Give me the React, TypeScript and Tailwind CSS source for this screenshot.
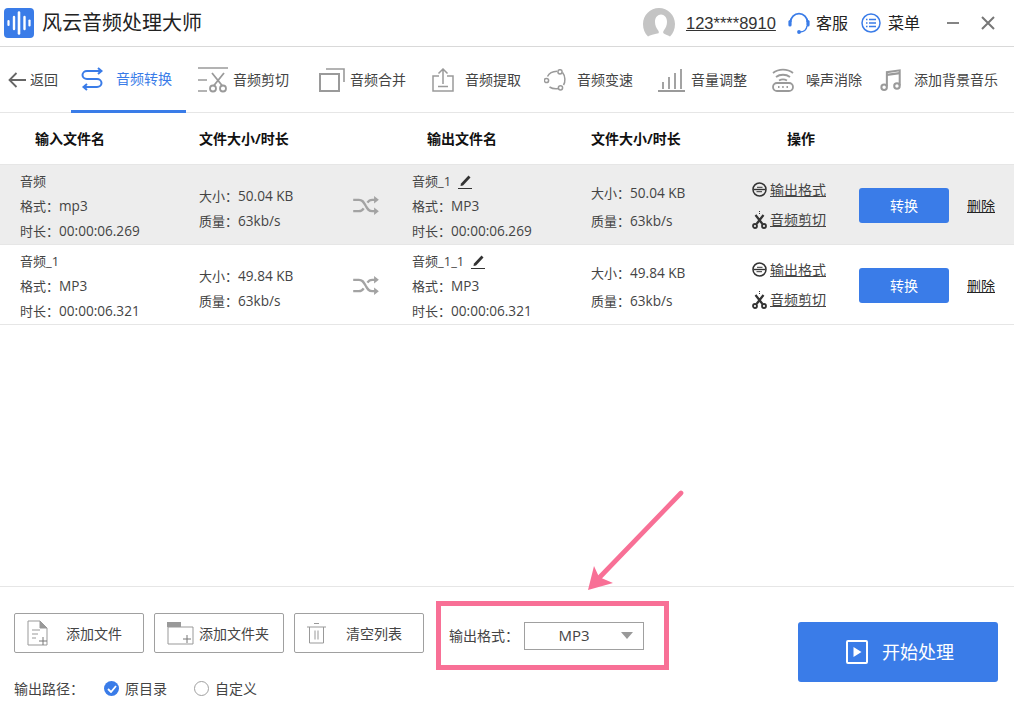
import React from "react";

const FONT = { fontFamily: '"Open Sans", "Noto Sans CJK SC", sans-serif' };

function Logo() {
  return (
    <svg width="30" height="30" viewBox="0 0 30 30">
      <rect width="30" height="30" rx="4" fill="#3a7ce8" />
      <g stroke="#fff" strokeLinecap="round" fill="none">
        <path d="M4.500 13v4" strokeWidth="2.200" />
        <path d="M10 9v12" strokeWidth="2.400" />
        <path d="M15 4.500v21" strokeWidth="2.600" />
        <path d="M20.500 9v12" strokeWidth="2.400" />
        <path d="M25.500 12.500v5" strokeWidth="2.200" />
      </g>
    </svg>
  );
}

function Avatar() {
  return (
    <svg width="32" height="30" viewBox="0 0 32 30">
      <path
        d="M5 28.500C1.800 25.500 0 21 0 16 0 7.200 7.200 0 16 0s16 7.200 16 16c0 5-1.800 9.500-5 12.500-2.400-1.300-5.500-2-6.500-3.200-.5-.8-.4-1.800.3-2.800 2-2.400 3.200-5.300 3.200-8.500 0-4.700-2.800-7.500-6-7.500s-6 2.800-6 7.500c0 3.200 1.200 6.100 3.200 8.500.7 1 .8 2 .3 2.800C10.500 26.500 7.400 27.200 5 28.500z"
        fill="#c4c4c4"
      />
    </svg>
  );
}

function Headset() {
  return (
    <svg width="22" height="22" viewBox="0 0 22 22" fill="none">
      <path d="M2.600 10a8.400 8.400 0 0 1 16.800 0" stroke="#3a7ce8" strokeWidth="1.800" />
      <rect x="0.400" y="8" width="3.200" height="6.500" rx="1.600" fill="#3a7ce8" />
      <rect x="18.400" y="8" width="3.200" height="6.500" rx="1.600" fill="#3a7ce8" />
      <path d="M19 14c-.5 3.500-3.500 5.800-7 6" stroke="#3a7ce8" strokeWidth="1.400" />
      <circle cx="11" cy="20" r="1.900" fill="#3a7ce8" />
    </svg>
  );
}

function MenuCircle() {
  return (
    <svg width="20" height="20" viewBox="0 0 20 20" fill="none">
      <circle cx="10" cy="10" r="9" stroke="#3a7ce8" strokeWidth="1.500" />
      <path d="M8 6.500h7M8 10h7M8 13.500h7" stroke="#3a7ce8" strokeWidth="1.500" />
      <path d="M5 6.500h1.500M5 10h1.500M5 13.500h1.500" stroke="#3a7ce8" strokeWidth="1.500" />
    </svg>
  );
}

function NavIcon({ name }: { name: string }) {
  const gray = "#9a9a9a";
  if (name === "convert") {
    return (
      <svg width="22" height="24" viewBox="0 0 22 24" fill="none" stroke="#3a7ce8" strokeWidth="2">
        <path d="M17 1l3.500 3-3.500 3" />
        <path d="M20 4H6C3.500 4 1.500 5.800 1.500 8S3.500 12 6 12h10c2.500 0 4.500 1.800 4.500 4s-2 4-4.500 4H3" />
        <path d="M6 17l-3.500 3L6 23" />
      </svg>
    );
  }
  if (name === "cut") {
    return (
      <svg width="30" height="26" viewBox="0 0 30 26" fill="none" stroke={gray} strokeWidth="1.600">
        <path d="M0 1h30M0 13h9M0 24h9" />
        <path d="M14 6l10.500 13M26 6L15.500 19" strokeWidth="1.800" />
        <circle cx="15" cy="21.500" r="3" strokeWidth="1.800" />
        <circle cx="25" cy="21.500" r="3" strokeWidth="1.800" />
      </svg>
    );
  }
  if (name === "merge") {
    return (
      <svg width="26" height="24" viewBox="0 0 26 24" fill="none" stroke={gray} strokeWidth="2">
        <rect x="1" y="6" width="19" height="17" />
        <path d="M7 1h18v13" strokeWidth="1.600" />
      </svg>
    );
  }
  if (name === "extract") {
    return (
      <svg width="22" height="24" viewBox="0 0 22 24" fill="none" stroke={gray} strokeWidth="1.500">
        <path d="M7 8H1v15h20V8h-6" />
        <path d="M11 16V1M6.500 5.500L11 1l4.500 4.500" />
        <path d="M6 18.500h10" />
      </svg>
    );
  }
  if (name === "speed") {
    return (
      <svg width="22" height="22" viewBox="0 0 22 22" fill="none" stroke={gray} strokeWidth="1.500">
        <path d="M3.500 7.500C5 4.500 8 2.500 13 2.300M18.500 3.500C21.500 7 21.500 13 19.500 16M14.500 19.500c-2.500.5-6 .3-9-1.500" />
        <circle cx="16" cy="2.800" r="2.100" />
        <circle cx="2.500" cy="11.500" r="2.100" />
        <circle cx="16.500" cy="18.800" r="2.100" />
      </svg>
    );
  }
  if (name === "volume") {
    return (
      <svg width="27" height="24" viewBox="0 0 27 24" fill="none" stroke={gray} strokeWidth="1.800">
        <path d="M0 23h27M5 21v-7M11 21V9M17 21V5M23 21V1" />
      </svg>
    );
  }
  if (name === "noise") {
    return (
      <svg width="22" height="24" viewBox="0 0 22 24" fill="none" stroke={gray} strokeWidth="1.800">
        <path d="M1 5C6.500 .5 15.500 .5 21 5M4 9c4-3 10-3 14 0M7 12.500c2.500-1.500 5.500-1.500 8 0" />
        <rect x="1" y="15" width="20" height="8" rx="4" />
        <path d="M6 19h1.500M10.200 19h1.500M14.500 19H16" />
      </svg>
    );
  }
  return (
    <svg width="24" height="24" viewBox="0 0 24 24" fill="none" stroke={gray}>
      <path d="M7.500 19V3.500L21.500 1.500V18" strokeWidth="2.200" />
      <path d="M7.500 6.500L21.500 4.500" strokeWidth="2.500" />
      <circle cx="4.500" cy="20" r="3" strokeWidth="2.200" />
      <circle cx="18.500" cy="18.500" r="3" strokeWidth="2.200" />
    </svg>
  );
}

const navItems = [
  { key: "convert", label: "音频转换", width: "w-[115px]", gap: "gap-[13px]", pl: "pl-[10px]" },
  { key: "cut", label: "音频剪切", width: "w-[117px]", gap: "gap-[5px]", pl: "pl-[12px]" },
  { key: "merge", label: "音频合并", width: "w-[114px]", gap: "gap-[5px]", pl: "pl-[16px]" },
  { key: "extract", label: "音频提取", width: "w-[112px]", gap: "gap-[11px]", pl: "pl-[15px]" },
  { key: "speed", label: "音频变速", width: "w-[115px]", gap: "gap-[11px]", pl: "pl-[15px]" },
  { key: "volume", label: "音量调整", width: "w-[113px]", gap: "gap-[6px]", pl: "pl-[14px]" },
  { key: "noise", label: "噪声消除", width: "w-[107px]", gap: "gap-[12px]", pl: "pl-[15px]" },
  { key: "music", label: "添加背景音乐", width: "w-[134px]", gap: "gap-[12px]", pl: "pl-[16px]" },
];

function Shuffle() {
  return (
    <svg className="ml-[1px]" width="27" height="19" viewBox="0 0 28 20" fill="none" stroke="#a3a3a3" strokeWidth="2.400">
      <path d="M0 4h6c4 0 5 2.500 7 6s3 6 7 6h4" />
      <path d="M0 16h6c2.500 0 3.800-1 5-3M15 7c1.200-2 2.500-3 5-3h4" />
      <path d="M22 0l5 4-5 4zM22 12l5 4-5 4z" fill="#a3a3a3" stroke="none" />
    </svg>
  );
}

function Pencil() {
  return (
    <svg width="14" height="16" viewBox="0 0 14 16">
      <path d="M3 10.500L10.500 2.500l2 2L5 12.500 2.500 13z" fill="#333" />
      <path d="M0 15.500h14" stroke="#333" strokeWidth="1" />
    </svg>
  );
}

function FormatIcon() {
  return (
    <svg width="15" height="15" viewBox="0 0 15 15" fill="none" stroke="#333">
      <circle cx="7.500" cy="7.500" r="6.500" strokeWidth="1.500" />
      <path d="M1.500 7.500h12" strokeWidth="1.400" />
      <path d="M5 5.300h5.500M4.500 9.700H10" strokeWidth="1" />
    </svg>
  );
}

function ScissorIcon() {
  return (
    <svg width="15" height="18" viewBox="0 0 15 18" fill="none" stroke="#333">
      <path d="M7.500 0v4" strokeWidth="1" strokeDasharray="1 1" />
      <path d="M3.500 4l7 9M11.500 4l-7 9" strokeWidth="2.200" />
      <circle cx="3" cy="15" r="2" strokeWidth="1.800" />
      <circle cx="12" cy="15" r="2" strokeWidth="1.800" />
    </svg>
  );
}

// latin runs in the reference are a bit wider than the CJK size next to them
function Val({ children }: { children: React.ReactNode }) {
  return <span className="text-[13.6px]">{children}</span>;
}

const rows = [
  {
    active: true,
    name: "音频",
    format: "mp3",
    duration: "00:00:06.269",
    size: "50.04 KB",
    out: "音频_1",
  },
  {
    active: false,
    name: "音频_1",
    format: "MP3",
    duration: "00:00:06.321",
    size: "49.84 KB",
    out: "音频_1_1",
  },
];

const gridCols = "grid-cols-[199px_153px_60px_179px_161px_107px_108px_1fr]";

function FileRow({ row }: { row: (typeof rows)[number] }) {
  return (
    <div
      className={`grid ${gridCols} h-[80px] pt-[2px] items-center border-b border-[#e6e6e6] text-[13px] text-[#444] ${
        row.active ? "bg-[#ededed]" : "bg-white"
      }`}
    >
      <div className="pl-[20px] flex flex-col gap-[5px] leading-[20px]">
        <span>{row.name}</span>
        <span>
          格式：<Val>{row.format}</Val>
        </span>
        <span>
          时长：<Val>{row.duration}</Val>
        </span>
      </div>
      <div className="flex flex-col gap-[5px] leading-[20px] mt-[5px]">
        <span>
          大小：<Val>{row.size}</Val>
        </span>
        <span>
          质量：<Val>63kb/s</Val>
        </span>
      </div>
      <div>
        <Shuffle />
      </div>
      <div className="flex flex-col gap-[5px] leading-[20px]">
        <span className="flex items-center gap-[7px]">
          {row.out} <Pencil />
        </span>
        <span>
          格式：<Val>MP3</Val>
        </span>
        <span>
          时长：<Val>{row.duration}</Val>
        </span>
      </div>
      <div className="flex flex-col gap-[8px] leading-[20px] mt-[2px]">
        <span>
          大小：<Val>{row.size}</Val>
        </span>
        <span>
          质量：<Val>63kb/s</Val>
        </span>
      </div>
      <div className="flex flex-col gap-[10px] leading-[20px] text-[14px] -mt-[2px]">
        <span className="flex items-center gap-[3px]">
          <FormatIcon />
          <span className="underline">输出格式</span>
        </span>
        <span className="flex items-center gap-[3px]">
          <ScissorIcon />
          <span className="underline">音频剪切</span>
        </span>
      </div>
      <div>
        <button className="w-[90px] h-[35px] rounded-[3px] bg-[#3a7ce8] text-white text-[14px]">转换</button>
      </div>
      <div className="underline text-[#222] text-[14px]">删除</div>
    </div>
  );
}

function BottomButton({ icon, label, className }: { icon: React.ReactNode; label: string; className: string }) {
  return (
    <button className={`relative flex items-center w-[130px] h-[40px] border border-[#a0a0a0] rounded-[2px] text-[14px] text-[#444] ${className}`}>
      {icon}
      <span>{label}</span>
    </button>
  );
}

export default function App() {
  return (
    <div className="relative flex flex-col h-[702px] w-[1014px] overflow-hidden bg-white" style={FONT}>
      {/* Title bar */}
      <div className="flex items-center h-[47px] border-b border-[#d9d9d9] pl-[4px] pr-[19px] text-[#222]">
        <Logo />
        <span className="ml-[8px] text-[20px] leading-none">风云音频处理大师</span>
        <div className="ml-auto flex items-center">
          <Avatar />
          <span className="ml-[11px] w-[91px] whitespace-nowrap font-['Liberation_Sans'] text-[16.5px] underline text-[#333]">123****8910</span>
          <span className="ml-[11px]">
            <Headset />
          </span>
          <span className="ml-[6px] text-[16px]">客服</span>
          <span className="ml-[13px]">
            <MenuCircle />
          </span>
          <span className="ml-[7px] text-[16px]">菜单</span>
          <svg className="ml-[26px]" width="14" height="14" viewBox="0 0 14 14" stroke="#777" strokeWidth="1.800">
            <path d="M1 7h12" />
          </svg>
          <svg className="ml-[21px]" width="14" height="14" viewBox="0 0 14 14" stroke="#777" strokeWidth="2">
            <path d="M1 1l12 12M13 1L1 13" />
          </svg>
        </div>
      </div>

      {/* Tool nav */}
      <div className="flex h-[66px] border-b border-[#e6e6e6] text-[14px] text-[#444]">
        <div className="flex items-center w-[71px] pl-[8px] gap-[3px]">
          <svg width="19" height="16" viewBox="0 0 19 16" fill="none" stroke="#666" strokeWidth="1.800">
            <path d="M18 8H2M8.500 1L1.500 8l7 7" />
          </svg>
          <span>返回</span>
        </div>
        {navItems.map((item) => (
          <div
            key={item.key}
            className={`flex items-center shrink-0 ${item.width} ${item.gap} ${item.pl} ${
              item.key === "convert" ? "border-b-[3px] border-[#3a7ce8] text-[#3a7ce8] h-[66px]" : ""
            }`}
          >
            <NavIcon name={item.key} />
            <span className="whitespace-nowrap">{item.label}</span>
          </div>
        ))}
      </div>

      {/* Table */}
      <div className={`grid ${gridCols} h-[52px] pb-[1px] border-b border-[#e6e6e6] items-center text-[14px] font-bold text-[#111]`}>
        <div className="pl-[35px]">输入文件名</div>
        <div>文件大小/时长</div>
        <div />
        <div className="pl-[15px]">输出文件名</div>
        <div>文件大小/时长</div>
        <div className="pl-[35px] col-span-2">操作</div>
        <div />
      </div>
      {rows.map((row) => (
        <FileRow key={row.name} row={row} />
      ))}

      {/* Footer */}
      <div className="mt-auto h-[116px] border-t border-[#e6e6e6] flex px-[14px]">
        <div className="flex flex-col">
          <div className="flex items-center gap-[10px] mt-[26px]">
            <BottomButton
              className="pl-[12px] gap-[17px]"
              label="添加文件"
              icon={
                <svg width="22" height="26" viewBox="0 0 22 26" fill="none" stroke="#999">
                  <path d="M1 1h12l7 7v17H1z" />
                  <path d="M13 1l7 7h-7z" fill="#999" />
                  <path d="M5 10h8M5 14h6M5 18h4" />
                  <path d="M12 21h8M16 17v8" stroke="#777" />
                </svg>
              }
            />
            <BottomButton
              className="pl-[12px] gap-[5px]"
              label="添加文件夹"
              icon={
                <svg width="27" height="23" viewBox="0 0 27 23" fill="none" stroke="#999">
                  <path d="M1 5h25v17H1z" />
                  <rect x="0" y="0" width="14" height="5" fill="#999" stroke="none" />
                  <path d="M16 17h8M20 13v8" stroke="#777" />
                </svg>
              }
            />
            <BottomButton
              className="pl-[12px] gap-[20px]"
              label="清空列表"
              icon={
                <svg width="19" height="21" viewBox="0 0 19 21" fill="none" stroke="#999">
                  <path d="M0 4h19M7 .5h5" />
                  <path d="M2.500 4v16h14V4" />
                  <path d="M8 7.500v9M11 7.500v9" />
                </svg>
              }
            />
          </div>
          <div className="flex items-center mt-[25px] text-[14px] text-[#444]">
            <span className="w-[90px]">输出路径：</span>
            <span className="w-[15px] h-[15px] rounded-full bg-[#3a7ce8] flex items-center justify-center">
              <svg width="10" height="8" viewBox="0 0 10 8" fill="none" stroke="#fff" strokeWidth="1.800">
                <path d="M1 4l3 3 5-6" />
              </svg>
            </span>
            <span className="ml-[6px]">原目录</span>
            <span className="ml-[27px] w-[15px] h-[15px] rounded-full border border-[#a0a0a0]" />
            <span className="ml-[6px]">自定义</span>
          </div>
        </div>

        <div className="ml-[12px] mt-[14px] w-[233px] h-[69px] border-[5px] border-[#f87096] flex items-center pl-[8px] text-[14px] text-[#444]">
          <span className="w-[75px] whitespace-nowrap">输出格式：</span>
          <div className="relative flex items-center justify-center w-[120px] h-[28px] border border-[#a0a0a0] text-[15px]">
            <span className="-ml-[20px]">MP3</span>
            <svg className="absolute right-[10px] top-[9px]" width="12" height="8" viewBox="0 0 12 8">
              <path d="M0 0h12L6 7z" fill="#999" />
            </svg>
          </div>
        </div>

        <button className="ml-[129px] mt-[35px] w-[200px] h-[60px] pl-[4px] rounded-[3px] bg-[#3a7ce8] text-white text-[18px] flex items-center justify-center gap-[14px]">
          <svg width="22" height="24" viewBox="0 0 22 24" fill="none">
            <rect x="1" y="1" width="20" height="22" stroke="#fff" strokeWidth="2" rx="1" />
            <path d="M7.500 7v10l8-5z" fill="#fff" />
          </svg>
          <span>开始处理</span>
        </button>
      </div>

      {/* Annotation arrow */}
      <svg className="absolute left-[580px] top-[485px]" width="110" height="110" viewBox="0 0 110 110" fill="none">
        <path d="M101 8L18 94" stroke="#f87096" strokeWidth="4.700" strokeLinecap="round" />
        <path d="M8 105L14 81 19 92 33 98z" fill="#f87096" />
      </svg>
    </div>
  );
}
